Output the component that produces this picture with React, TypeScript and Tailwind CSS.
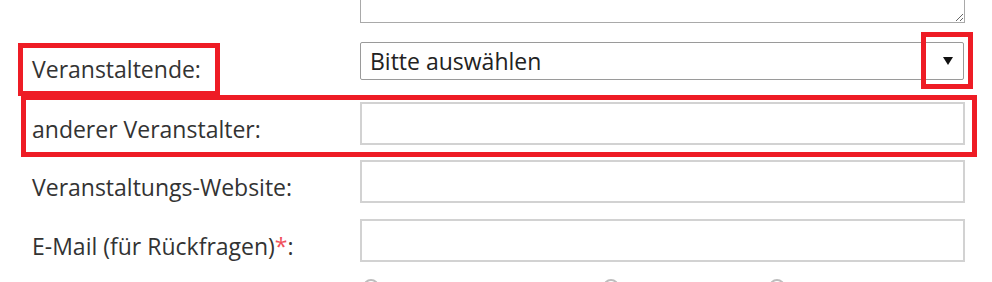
import React from "react";

const font = { fontFamily: '"Open Sans", "Liberation Sans", sans-serif' };

const Label: React.FC<{ children: React.ReactNode }> = ({ children }) => (
    <label className="w-[328px] shrink-0 pt-[12px] text-[23px] leading-[31px] text-[#333]">{children}</label>
);

const TextInput: React.FC = () => (
    <input
        type="text"
        className="h-[43px] w-[605px] border-2 border-[#d2d2d2] bg-white px-2 text-[23px] outline-none"
    />
);

export default function App() {
    return (
        <div className="relative h-[282px] w-[992px] overflow-hidden bg-white" style={font}>
            {/* Tail end of the description textarea */}
            <div className="ml-[360px] h-[23px] w-[605px] overflow-hidden">
                <textarea className="-mt-[40px] block h-[63px] w-[605px] resize border border-[#a9a9a9] bg-white" />
            </div>

            <div className="flex flex-col pl-[32px]">
                {/* Veranstaltende */}
                <div className="mt-[19px] flex h-[43px]">
                    <Label>Veranstaltende:</Label>
                    <div className="relative h-[38px]">
                        <select className="h-[38px] w-[604px] appearance-none rounded-[2px] border border-[#9a9a9a] bg-white pl-[9px] text-[23px] leading-[31px] text-[#222] outline-none">
                            <option>Bitte auswählen</option>
                        </select>
                        <svg className="pointer-events-none absolute right-[11px] top-[15px]" width="10" height="8" viewBox="0 0 10 8">
                            <path d="M0 0h10L5 8z" fill="#111" />
                        </svg>
                    </div>
                </div>

                {/* anderer Veranstalter */}
                <div className="mt-[17px] flex">
                    <Label>anderer Veranstalter:</Label>
                    <TextInput />
                </div>

                <div className="mt-[15px] flex">
                    <Label>Veranstaltungs-Website:</Label>
                    <TextInput />
                </div>

                <div className="mt-[16px] flex">
                    <Label>
                        E-Mail (für Rückfragen)<span className="text-[#f0505a]">*</span>:
                    </Label>
                    <TextInput />
                </div>

                {/* radio buttons peeking in at the bottom */}
                <div className="mt-[17px] flex pl-[331px]">
                    <span className="h-[16px] w-[16px] rounded-full border-2 border-[#bdbdbd]" />
                    <span className="ml-[224px] h-[16px] w-[16px] rounded-full border-2 border-[#bdbdbd]" />
                    <span className="ml-[150px] h-[16px] w-[16px] rounded-full border-2 border-[#bdbdbd]" />
                </div>
            </div>

            {/* red annotation boxes */}
            <div className="pointer-events-none absolute left-[18px] top-[43px] h-[53px] w-[202px] border-[5px] border-[#ee1c25]" />
            <div className="pointer-events-none absolute left-[21px] top-[95px] h-[62px] w-[956px] border-[5px] border-[#ee1c25]" />
            <div className="pointer-events-none absolute left-[921px] top-[32px] h-[57px] w-[52px] border-[5px] border-[#ee1c25]" />
        </div>
    );
}
